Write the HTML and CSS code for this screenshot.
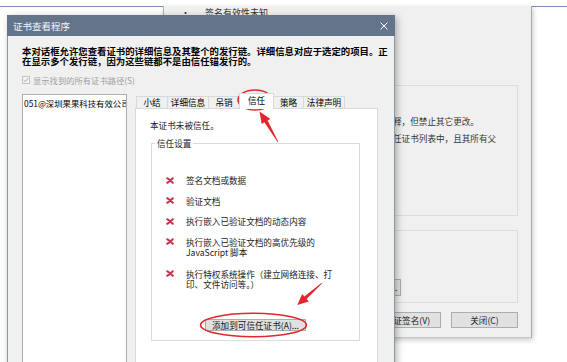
FILE: index.html
```html
<!DOCTYPE html>
<html lang="zh-CN">
<head>
<meta charset="utf-8">
<title>证书查看程序</title>
<link rel="stylesheet" href="styles.css">
</head>
<body>
<div class="desk">
  <div class="backwin"></div>

  <div class="sigwin">
    <div class="sig-head"><span class="bullet">•</span><span>签名有效性未知</span></div>
    <div class="sig-group">
      <p class="sig-line">释，但禁止其它更改。</p>
      <p class="sig-line">任证书列表中，且其所有父</p>
    </div>
    <div class="sig-group2"><div class="sig-btn sig-btn-small">签名属性(R)...</div></div>
    <div class="sig-actions">
      <div class="sig-btn sig-btn-cut">验证签名(V)</div>
      <div class="sig-btn">关闭(C)</div>
    </div>
  </div>

  <div class="dialog">
    <div class="titlebar">
      <span class="title">证书查看程序</span>
      <svg class="close" width="8" height="8" viewBox="0 0 8 8"><path d="M0.5 0.5 L7.5 7.5 M7.5 0.5 L0.5 7.5" stroke="#ffffff" stroke-width="1" fill="none"/></svg>
    </div>
    <div class="dlg-body">
      <p class="intro">本对话框允许您查看证书的详细信息及其整个的发行链。详细信息对应于选定的项目。正在显示多个发行链，因为这些链都不是由信任锚发行的。</p>
      <div class="chk-row">
        <svg class="chk" width="8" height="8" viewBox="0 0 8 8"><rect x="0.5" y="0.5" width="7" height="7" fill="#f4f4f4" stroke="#c4c4c4"/><path d="M1.8 4.2 L3.3 5.6 L6.3 2.2" stroke="#a8a8a8" stroke-width="1" fill="none"/></svg>
        <span>显示找到的所有证书路径(S)</span>
      </div>
      <div class="main">
        <div class="chain"><div class="chain-item">051@深圳果果科技有效公司</div></div>
        <div class="tabs">
          <div class="tabstrip">
            <div class="tab t-s">小结</div>
            <div class="tab t-l">详细信息</div>
            <div class="tab t-s">吊销</div>
            <div class="tab tab-sel">信任</div>
            <div class="tab t-p">策略</div>
            <div class="tab t-l">法律声明</div>
          </div>
          <div class="panel">
            <p class="status">本证书未被信任。</p>
            <fieldset class="trust">
              <legend>信任设置</legend>
              <ul class="perm">
                <li><svg class="x" width="8" height="7" viewBox="0 0 8 7"><path d="M1.2 1.2 Q4 3 6.8 5.8 M6.8 1.2 Q4 4 1.2 5.8" stroke="#c8334f" stroke-width="2" stroke-linecap="round" fill="none"/></svg><span>签名文档或数据</span></li>
                <li><svg class="x" width="8" height="7" viewBox="0 0 8 7"><path d="M1.2 1.2 Q4 3 6.8 5.8 M6.8 1.2 Q4 4 1.2 5.8" stroke="#c8334f" stroke-width="2" stroke-linecap="round" fill="none"/></svg><span>验证文档</span></li>
                <li><svg class="x" width="8" height="7" viewBox="0 0 8 7"><path d="M1.2 1.2 Q4 3 6.8 5.8 M6.8 1.2 Q4 4 1.2 5.8" stroke="#c8334f" stroke-width="2" stroke-linecap="round" fill="none"/></svg><span>执行嵌入已验证文档的动态内容</span></li>
                <li><svg class="x" width="8" height="7" viewBox="0 0 8 7"><path d="M1.2 1.2 Q4 3 6.8 5.8 M6.8 1.2 Q4 4 1.2 5.8" stroke="#c8334f" stroke-width="2" stroke-linecap="round" fill="none"/></svg><span>执行嵌入已验证文档的高优先级的 JavaScript 脚本</span></li>
                <li class="last"><svg class="x" width="8" height="7" viewBox="0 0 8 7"><path d="M1.2 1.2 Q4 3 6.8 5.8 M6.8 1.2 Q4 4 1.2 5.8" stroke="#c8334f" stroke-width="2" stroke-linecap="round" fill="none"/></svg><span>执行特权系统操作（建立网络连接、打印、文件访问等。）</span></li>
              </ul>
              <div class="btn-row"><div class="btn">添加到可信任证书(A)...</div></div>
            </fieldset>
          </div>
        </div>
      </div>
    </div>
  </div>

  <svg class="annot" width="567" height="362" viewBox="0 0 567 362">
    <ellipse cx="255" cy="100" rx="17" ry="10" fill="none" stroke="#e3262b" stroke-width="1.5"/>
    <polygon points="259.5,111.5 270.4,118.9 267.6,120.5 278.3,141.8 277.7,142.2 264.4,122.3 261.7,123.9" fill="#e3262b"/>
    <ellipse cx="253.5" cy="325" rx="53" ry="11.8" fill="none" stroke="#e3262b" stroke-width="1.5"/>
    <polygon points="297.3,305 308.8,301.4 306.6,298.9 322,283.6 321.4,283 304.4,296.5 302.2,294" fill="#e3262b"/>
  </svg>
</div>
</body>
</html>
```
FILE: styles.css
```css
* { box-sizing: border-box; }
html, body { margin: 0; padding: 0; }
body {
  width: 567px;
  height: 362px;
  overflow: hidden;
  background: #ffffff;
  font-family: "Noto Sans CJK SC", "Microsoft YaHei", sans-serif;
  color: #000;
}
p { margin: 0; }

.desk { position: relative; width: 567px; height: 362px; overflow: hidden; }

.backwin {
  position: absolute;
  left: 0; top: 6px;
  width: 567px; height: 356px;
  background: #ffffff;
  border-top: 1px solid #7391b5;
}

/* background signature window */
.sigwin {
  position: absolute;
  left: 163px; top: 6px;
  width: 369px; height: 332px;
  background: #f0f0f0;
  border-left: 1px solid #b4b4b4;
  border-right: 1px solid #a8a8a8;
  border-bottom: 1px solid #c4c4c4;
  box-shadow: 1px 2px 5px rgba(0,0,0,0.22);
  font-size: 8.6px;
  color: #333;
  display: flex;
  flex-direction: column;
}
.sig-head { display: flex; padding: 1px 0 0 17px; line-height: 12px; font-size: 9px; }
.bullet { width: 24px; }
.sig-group {
  margin: 66px 13px 0 14px;
  height: 131px;
  border: 1px solid #dcdcdc;
  padding: 30px 0 0 214px;
  line-height: 10px;
  white-space: nowrap;
  overflow: hidden;
}
.sig-line + .sig-line { margin-top: 7px; }
.sig-group2 {
  margin: 14px 13px 0 14px;
  height: 73px;
  border: 1px solid #dcdcdc;
  padding: 48px 0 0 162px;
}
.sig-actions {
  margin-top: 9px;
  display: flex;
  justify-content: flex-end;
  gap: 10px;
  padding-right: 13px;
}
.sig-btn {
  width: 67px; height: 16px;
  background: #e1e1e1;
  border: 1px solid #adadad;
  line-height: 14px;
  text-align: center;
  color: #222;
  white-space: nowrap;
}
.sig-btn-small { width: 60px; height: 17px; }

/* front dialog */
.dialog {
  position: absolute;
  left: 7px; top: 15px;
  width: 388px; height: 360px;
  background: #f0f0f0;
  border: 1px solid #8b97a6;
  border-top: none;
  box-shadow: 2px 2px 7px rgba(0,0,0,0.3);
}
.titlebar {
  height: 21px;
  margin: 0 -1px;
  background: #64748a;
  display: flex;
  align-items: center;
  justify-content: space-between;
  padding: 0 7px 0 6px;
  color: #f4f6f8;
  font-size: 9.5px;
}
.close { display: block; }
.dlg-body { padding: 10px 0 0 14px; }
.intro {
  width: 372px;
  font-size: 9.4px;
  font-weight: bold;
  line-height: 10px;
  color: #000;
}
.chk-row {
  margin-top: 8px;
  height: 12px;
  display: flex;
  align-items: center;
  gap: 3px;
  font-size: 8.3px;
  color: #a0a0a0;
}
.chk { display: block; }
.main { margin-top: 7px; display: flex; gap: 8px; align-items: flex-start; }
.chain {
  margin-top: 1px;
  width: 105px; height: 290px;
  background: #fff;
  border: 1px solid #abadb3;
  padding: 3px 1px;
  font-size: 8.4px;
  line-height: 10px;
  white-space: nowrap;
  overflow: hidden;
}
.tabs { width: 243px; }
.tabstrip { display: flex; align-items: flex-end; height: 15px; padding-left: 1px; }
.tab {
  height: 12px;
  background: #f0f0f0;
  border: 1px solid #d9d9d9;
  border-bottom: none;
  font-size: 8.6px;
  line-height: 11px;
  text-align: center;
  white-space: nowrap;
}
.tab + .tab { margin-left: -1px; }
.t-s { width: 32px; }
.t-l { width: 42px; }
.t-p { width: 31px; }
.tab-sel {
  width: 35px;
  height: 16px;
  margin-bottom: -1px;
  background: #fff;
  position: relative;
  z-index: 1;
  line-height: 13px;
}
.panel {
  height: 260px;
  background: #fff;
  border: 1px solid #d9d9d9;
  padding: 11px 0 0 14px;
}
.status { font-size: 8.6px; line-height: 10px; color: #222; }
.trust {
  margin: 8px 0 0 1px;
  width: 209px;
  padding: 27px 0 9px 0;
  border: 1px solid #dcdcdc;
  min-width: 0;
}
.trust legend {
  margin-left: 3px;
  padding: 0 2px;
  font-size: 8.6px;
  line-height: 10px;
  color: #222;
}
.perm { list-style: none; margin: 0; padding: 0 0 0 14px; }
.perm li {
  display: flex;
  align-items: flex-start;
  gap: 12px;
  font-size: 8.6px;
  line-height: 10px;
  color: #222;
}
.perm li + li { margin-top: 10.5px; }
.perm li.last { margin-top: 12px; }
.perm span { width: 158px; }
.x { display: block; margin-top: 1.5px; flex: none; }
.btn-row { display: flex; justify-content: center; margin-top: 30px; }
.btn {
  width: 101px; height: 12px;
  background: #e1e1e1;
  border: 1px solid #adadad;
  font-size: 8.6px;
  line-height: 10px;
  text-align: center;
  color: #111;
  white-space: nowrap;
}

.annot { position: absolute; left: 0; top: 0; pointer-events: none; }
```
